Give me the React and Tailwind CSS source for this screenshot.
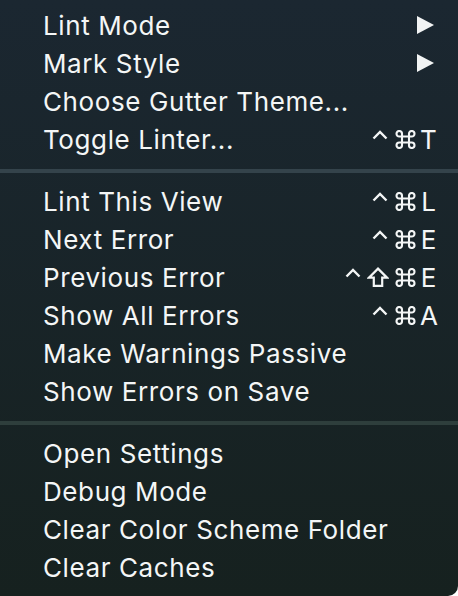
import React from "react";

const GROUPS = [
  [
    { label: "Lint Mode", sub: true },
    { label: "Mark Style", sub: true },
    { label: "Choose Gutter Theme..." },
    { label: "Toggle Linter...", keys: "T" },
  ],
  [
    { label: "Lint This View", keys: "L" },
    { label: "Next Error", keys: "E" },
    { label: "Previous Error", keys: "E", shift: true },
    { label: "Show All Errors", keys: "A" },
    { label: "Make Warnings Passive" },
    { label: "Show Errors on Save" },
  ],
  [
    { label: "Open Settings" },
    { label: "Debug Mode" },
    { label: "Clear Color Scheme Folder" },
    { label: "Clear Caches" },
  ],
];

const Caret = () => (
  <svg width="16" height="19" viewBox="0 0 16 19" className="mr-[6px]">
    <path d="M1.5 8.5 L8 2 L14.5 8.5" fill="none" stroke="#f4f6f6" strokeWidth="2.4" />
  </svg>
);

const Shift = () => (
  <svg width="22" height="20" viewBox="0 0 22 20" className="mr-[5px]">
    <path d="M11 1.6 L20 10.6 H15.2 V18.8 H6.8 V10.6 H2 Z" fill="none" stroke="#f4f6f6" strokeWidth="2.2" strokeLinejoin="miter" />
  </svg>
);

// place-of-interest sign, four loops round a square
const Cmd = () => (
  <svg width="23" height="19" viewBox="0 0 23 19" className="mr-[3px]">
    <path
      d="M8 6.5 V12.5 M15 6.5 V12.5 M8 6.5 H15 M8 12.5 H15 M8 6.5 H5.25 A2.75 2.75 0 1 1 8 3.75 Z M15 6.5 V3.75 A2.75 2.75 0 1 1 17.75 6.5 Z M8 12.5 V15.25 A2.75 2.75 0 1 1 5.25 12.5 Z M15 12.5 H17.75 A2.75 2.75 0 1 1 15 15.25 Z"
      fill="none"
      stroke="#f4f6f6"
      strokeWidth="2.1"
    />
  </svg>
);

function Row({ item }) {
  return (
    <div className="flex items-center justify-between h-[38px] pl-[43px] pr-[21px]">
      <span className="tracking-[0.6px]">{item.label}</span>
      {item.sub && (
        <svg width="17" height="18" viewBox="0 0 17 18" className="mr-[3px]">
          <path d="M0 0 L17 9 L0 18 Z" fill="#f2f4f4" />
        </svg>
      )}
      {item.keys && (
        <span className="flex items-center">
          <Caret />
          {item.shift && <Shift />}
          <Cmd />
          <span className="w-[17px] text-center">{item.keys}</span>
        </span>
      )}
    </div>
  );
}

export default function App() {
  return (
    <div
      className="w-[458px] h-[596px] overflow-hidden rounded-br-[10px] bg-gradient-to-b from-[#1b2731] to-[#16211f] text-[#f4f6f6] text-[26px] pt-[6px]"
      style={{ fontFamily: "Inter, 'DejaVu Sans', sans-serif" }}
    >
      {GROUPS.map((group, gi) => (
        <div key={gi}>
          {gi > 0 && (
            <div className={`h-[4px] mt-[11px] mb-[9px] ${gi === 1 ? "bg-[#34434b]" : "bg-[#2e3e3c]"}`} />
          )}
          {group.map((item) => (
            <Row key={item.label} item={item} />
          ))}
        </div>
      ))}
    </div>
  );
}
